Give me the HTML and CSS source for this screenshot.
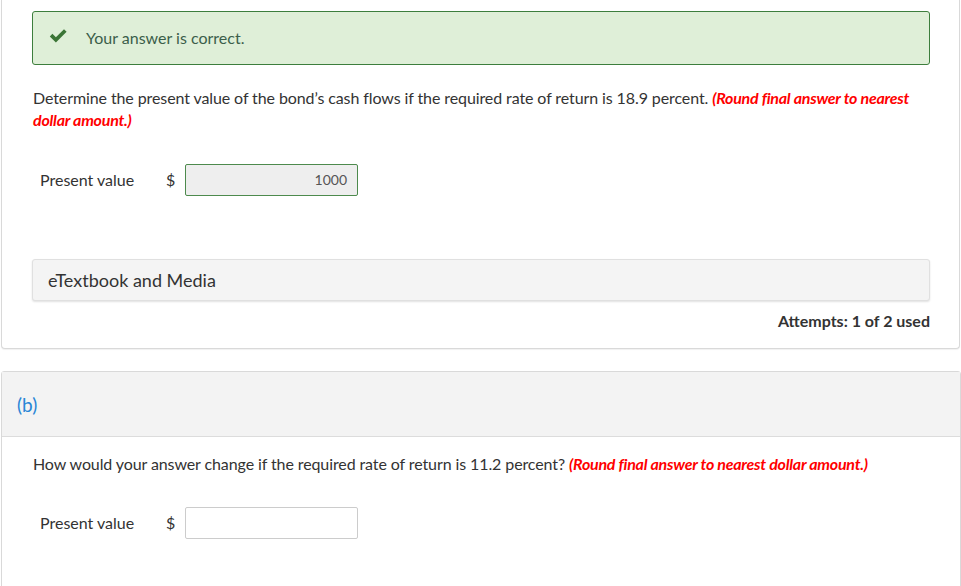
FILE: index.html
```html
<!DOCTYPE html>
<html>
<head>
<meta charset="utf-8">
<link rel="stylesheet" href="styles.css">
</head>
<body>
<div class="page">
  <section class="card card-a">
    <div class="alert">
      <svg class="check" width="19" height="15" viewBox="0 0 19 15"><path d="M0.8 7.4 L3.4 4.8 L6.9 8.3 L15.0 0.2 L17.6 2.8 L6.9 13.5 Z" fill="#3b7536"/></svg>
      <span class="alert-text">Your answer is correct.</span>
    </div>
    <p class="question">Determine the present value of the bond’s cash flows if the required rate of return is 18.9 percent. <em class="hint">(Round final answer to nearest dollar amount.)</em></p>
    <div class="answer-row">
      <span class="label">Present value</span>
      <span class="dollar">$</span>
      <div class="input filled">1000</div>
    </div>
    <div class="media">eTextbook and Media</div>
    <div class="attempts">Attempts: 1 of 2 used</div>
  </section>

  <section class="card card-b">
    <header class="part-head">(b)</header>
    <div class="part-body">
      <p class="question">How would your answer change if the required rate of return is 11.2 percent? <em class="hint">(Round final answer to nearest dollar amount.)</em></p>
      <div class="answer-row">
        <span class="label">Present value</span>
        <span class="dollar">$</span>
        <div class="input"></div>
      </div>
    </div>
  </section>
</div>
</body>
</html>
```

FILE: styles.css
```css
html, body {
  margin: 0;
  padding: 0;
  background: #fff;
}
body {
  font-family: Lato, "Open Sans", "Liberation Sans", sans-serif;
  color: #333;
  font-size: 16px;
  line-height: 22px;
}
.page {
  width: 961px;
  height: 586px;
  overflow: hidden;
  position: relative;
}
.card {
  box-sizing: border-box;
  border: 1px solid #d9d9d9;
  border-radius: 3px;
  margin-left: 1px;
  background: #fff;
}
.card-a {
  width: 959px;
  border-top: none;
  border-radius: 0 0 4px 4px;
  padding: 11px 29px 16px 30px;
  box-shadow: 0 1px 1px rgba(0,0,0,0.06);
}
.alert {
  display: flex;
  align-items: center;
  height: 54px;
  box-sizing: border-box;
  background: #dfefd8;
  border: 1px solid #3d7e3d;
  border-radius: 3px;
  padding-left: 16px;
}
.check {
  display: block;
  margin-top: -3px;
}
.alert-text {
  margin-left: 18px;
  color: #3b5e4a;
  font-size: 16px;
}
.question {
  margin: 22px 0 0 1px;
  font-size: 16px;
  line-height: 22px;
  color: #333;
  letter-spacing: -0.1px;
}
.hint {
  color: #f00;
  font-weight: bold;
  font-style: italic;
  letter-spacing: -0.25px;
}
.answer-row {
  display: flex;
  align-items: center;
  margin-top: 33px;
  padding-left: 8px;
}
.label {
  width: 126px;
  font-size: 16px;
}
.dollar {
  width: 19px;
  font-size: 16px;
}
.input {
  box-sizing: border-box;
  width: 173px;
  height: 32px;
  border: 1px solid #ccc;
  border-radius: 2px;
  background: #fff;
  font-size: 14px;
  line-height: 30px;
  text-align: right;
  padding-right: 10px;
  color: #555;
}
.input.filled {
  background: #eee;
  border-color: #4d8a4d;
}
.media {
  box-sizing: border-box;
  margin-top: 63px;
  height: 42px;
  background: #f4f4f4;
  border: 1px solid #e0e0e0;
  border-radius: 3px;
  box-shadow: 0 1px 2px rgba(0,0,0,0.12);
  padding-left: 15px;
  font-size: 18px;
  line-height: 40px;
  color: #333;
}
.attempts {
  margin-top: 9px;
  text-align: right;
  font-weight: bold;
  font-size: 16px;
  line-height: 22px;
  color: #333;
}
.card-b {
  width: 960px;
  margin-top: 22px;
  border-radius: 3px 3px 0 0;
}
.part-head {
  height: 65px;
  box-sizing: border-box;
  background: #f3f3f3;
  border-bottom: 1px solid #dcdcdc;
  padding: 22px 0 0 15px;
  font-size: 19px;
  line-height: 22px;
  color: #2a86d6;
}
.part-body {
  padding: 16px 29px 80px 30px;
}
.part-body .question {
  margin-top: 0;
}
.part-body .answer-row {
  margin-top: 32px;
}
```
